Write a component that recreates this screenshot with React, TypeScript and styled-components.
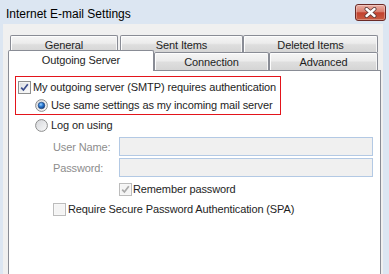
import React from 'react';
import styled, { createGlobalStyle } from 'styled-components';

const GlobalStyle = createGlobalStyle`
  html, body {
    margin: 0;
    padding: 0;
    background: #dce6f2;
  }
  body {
    font-family: "Liberation Sans", Arial, sans-serif;
    font-size: 11px;
    letter-spacing: -0.12px;
    white-space: nowrap;
    color: #1e1e1e;
  }
`;

const Window = styled.div`
  width: 389px;
  height: 274px;
  background: #dce6f2;
  display: flex;
  flex-direction: column;
  overflow: hidden;
`;

const TitleBar = styled.div`
  height: 24px;
  flex: none;
  display: flex;
  justify-content: space-between;
  align-items: flex-start;
  padding-left: 6px;
`;

const Title = styled.div`
  margin-top: 7px;
  font-size: 12px;
  line-height: 14px;
  letter-spacing: 0;
  color: #000;
`;

const CloseButton = styled.div`
  margin-top: 4px;
  margin-right: 3px;
  width: 31px;
  height: 17px;
  box-sizing: border-box;
  border: 1px solid #6b2a26;
  border-radius: 3px;
  background: linear-gradient(#eab0a6 0%, #d97f6f 45%, #c2412e 52%, #c85c42 100%);
  box-shadow: inset 0 0 0 1px rgba(255, 255, 255, 0.3);
  display: flex;
  align-items: center;
  justify-content: center;
`;

const Body = styled.div`
  flex: 1;
  margin: 0 6px 0 3px;
  background: #f0f0f0;
  padding: 11px 0 0 5px;
  display: flex;
  flex-direction: column;
`;

const TabRow = styled.div<{ $height: number; $indent: number }>`
  display: flex;
  flex: none;
  height: ${p => p.$height}px;
  padding-left: ${p => p.$indent}px;
`;

const Tab = styled.div<{ $w: number; $gap?: number }>`
  width: ${p => p.$w}px;
  margin-right: ${p => p.$gap || 0}px;
  flex: none;
  box-sizing: border-box;
  border: 1px solid #898c95;
  border-bottom: none;
  border-radius: 2px 2px 0 0;
  background: linear-gradient(#f5f5f5 0%, #ececec 45%, #dedede 55%, #d5d5d5 100%);
  box-shadow: inset 1px 1px 0 #fdfdfd, inset -1px 0 0 #f6f6f6;
  display: flex;
  align-items: center;
  justify-content: center;
  padding-top: 1px;
`;

const ActiveTab = styled(Tab)`
  position: relative;
  z-index: 1;
  height: 21px;
  margin-top: -2px;
  background: #fff;
  box-shadow: none;
  padding-top: 0;
  padding-bottom: 2px;
`;

const Panel = styled.div`
  width: 373px;
  flex: 1;
  box-sizing: border-box;
  background: #fff;
  border: 1px solid #898c95;
  border-bottom: none;
  padding: 5px 0 0 6px;
  display: flex;
  flex-direction: column;
`;

const RedBox = styled.div`
  width: 266px;
  box-sizing: border-box;
  border: 1px solid #e3141b;
  padding: 1px 0 0 2px;
  display: flex;
  flex-direction: column;
`;

const OptionRow = styled.div<{ $indent?: number; $top?: number; $gap?: number }>`
  height: 18px;
  display: flex;
  align-items: center;
  gap: ${p => p.$gap ?? 3}px;
  padding-left: ${p => p.$indent || 0}px;
  margin-top: ${p => p.$top || 0}px;
`;

const FieldRow = styled.div<{ $top: number }>`
  display: flex;
  align-items: flex-start;
  padding-left: 38px;
  margin-top: ${p => p.$top}px;
`;

const FieldLabel = styled.div`
  width: 66px;
  padding-top: 4px;
  color: #8d8d8d;
`;

const FieldInput = styled.div`
  width: 254px;
  height: 19px;
  box-sizing: border-box;
  border: 1px solid #b3c9e4;
  background: #f0f0f0;
`;

const BoxFrame = styled.span<{ $disabled?: boolean }>`
  width: 13px;
  height: 13px;
  flex: none;
  box-sizing: border-box;
  border: 1px solid ${p => (p.$disabled ? '#bcbcbc' : '#8e8f8f')};
  background: ${p =>
    p.$disabled
      ? '#f4f4f4'
      : 'linear-gradient(135deg, #d8dbe0 0%, #f0f1f2 60%, #fdfdfd 100%)'};
  box-shadow: inset 0 0 0 1px ${p => (p.$disabled ? '#f7f7f7' : '#f4f4f4')};
  display: flex;
  align-items: center;
  justify-content: center;
`;

const Checkbox = ({ checked, disabled }: { checked?: boolean; disabled?: boolean }) => (
  <BoxFrame $disabled={disabled}>
    {checked && (
      <svg width="11" height="11" viewBox="0 0 11 11">
        <path
          d="M2.2 5.6 L4.4 8 L8.8 2.2"
          fill="none"
          stroke={disabled ? '#a9a9a9' : '#3a4c8c'}
          strokeWidth="1.7"
        />
      </svg>
    )}
  </BoxFrame>
);

const Radio = ({ id, checked }: { id: string; checked?: boolean }) => (
  <svg width="13" height="13" viewBox="0 0 13 13" style={{ flex: 'none' }}>
    <defs>
      <linearGradient id={`${id}-bg`} x1="0" y1="0" x2="1" y2="1">
        <stop offset="0" stopColor="#d3d5d9" />
        <stop offset="1" stopColor="#fbfbfb" />
      </linearGradient>
      <radialGradient id={`${id}-dot`} cx="0.4" cy="0.35" r="0.7">
        <stop offset="0" stopColor="#9fd2ff" />
        <stop offset="0.45" stopColor="#2a7bd4" />
        <stop offset="1" stopColor="#0b3475" />
      </radialGradient>
    </defs>
    <circle cx="6.5" cy="6.5" r="5.9" fill={`url(#${id}-bg)`} stroke="#8e8f8f" strokeWidth="1" />
    {checked && <circle cx="6.5" cy="6.5" r="3.3" fill={`url(#${id}-dot)`} stroke="#1d3f76" strokeWidth="0.6" />}
  </svg>
);

const App: React.FC = () => {
  return (
    <>
      <GlobalStyle />
      <Window>
        <TitleBar>
          <Title>Internet E-mail Settings</Title>
          <CloseButton>
            <svg width="15" height="11" viewBox="0 0 15 11">
              <path d="M3.5 2 L11.5 9 M11.5 2 L3.5 9" stroke="#5a3a38" strokeWidth="4" strokeLinecap="round" />
              <path d="M3.5 2 L11.5 9 M11.5 2 L3.5 9" stroke="#fff" strokeWidth="2.4" strokeLinecap="round" />
            </svg>
          </CloseButton>
        </TitleBar>
        <Body>
          <TabRow $height={17} $indent={2}>
            <Tab $w={108} $gap={2}>General</Tab>
            <Tab $w={123}>Sent Items</Tab>
            <Tab $w={135}>Deleted Items</Tab>
          </TabRow>
          <TabRow $height={18} $indent={0}>
            <ActiveTab $w={146}>Outgoing Server</ActiveTab>
            <Tab $w={115}>Connection</Tab>
            <Tab $w={109}>Advanced</Tab>
          </TabRow>
          <Panel>
            <RedBox>
              <OptionRow $gap={2}>
                <Checkbox checked />
                <span>My outgoing server (SMTP) requires authentication</span>
              </OptionRow>
              <OptionRow $indent={17}>
                <Radio id="same" checked />
                <span>Use same settings as my incoming mail server</span>
              </OptionRow>
            </RedBox>
            <OptionRow $indent={20} $top={1}>
              <Radio id="logon" />
              <span>Log on using</span>
            </OptionRow>
            <FieldRow $top={3}>
              <FieldLabel>User Name:</FieldLabel>
              <FieldInput />
            </FieldRow>
            <FieldRow $top={2}>
              <FieldLabel>Password:</FieldLabel>
              <FieldInput />
            </FieldRow>
            <OptionRow $indent={104} $top={3} $gap={1}>
              <Checkbox checked disabled />
              <span>Remember password</span>
            </OptionRow>
            <OptionRow $indent={38} $top={2} $gap={2}>
              <Checkbox disabled />
              <span>Require Secure Password Authentication (SPA)</span>
            </OptionRow>
          </Panel>
        </Body>
      </Window>
    </>
  );
};

export default App;
